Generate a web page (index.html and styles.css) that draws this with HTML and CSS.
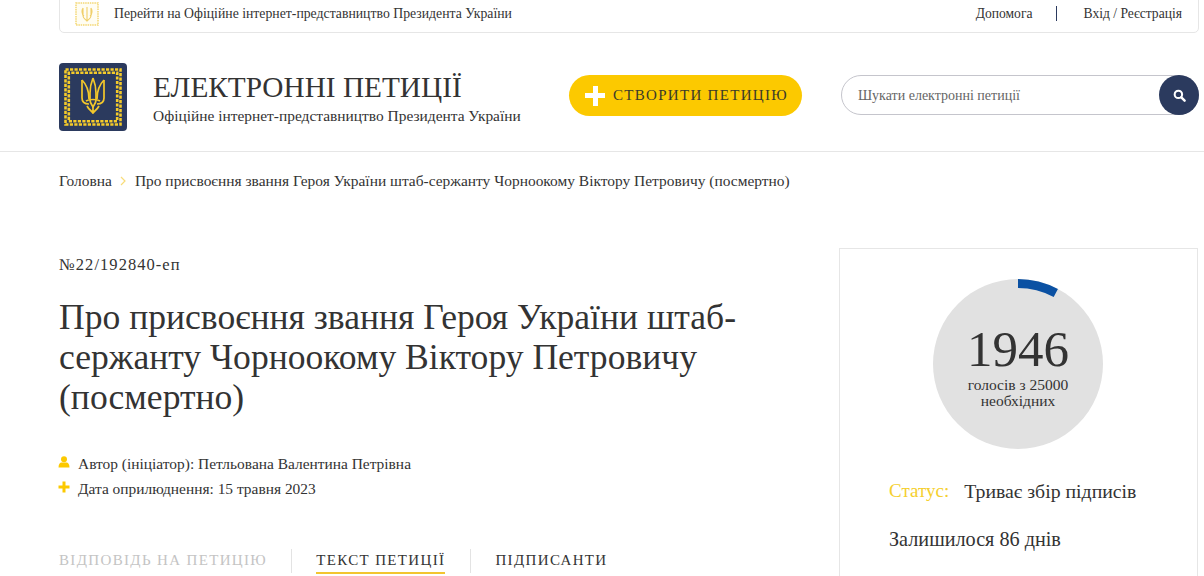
FILE: index.html
```html
<!DOCTYPE html>
<html lang="uk">
<head>
<meta charset="utf-8">
<title>Електронні петиції</title>
<link rel="stylesheet" href="styles.css">
</head>
<body>
<div class="topbar">
  <a class="topbar-link">
    <svg class="topbar-logo" viewBox="0 0 24 24">
      <rect x="1" y="1" width="22" height="22" fill="#fffdf2" stroke="#f3d774" stroke-width="1.500" stroke-dasharray="1.500 .8"/>
      <g fill="none" stroke="#f0cf6a" stroke-width="1.100"><path d="M12 5v14M8 6v8c0 2 2 3 4 5c2-2 4-3 4-5V6M8 6c-1.500 2-1.500 6 1 8M16 6c1.500 2 1.500 6-1 8"/></g>
    </svg>
    <span>Перейти на Офіційне інтернет-представництво Президента України</span>
  </a>
  <nav class="topbar-nav">
    <a>Допомога</a>
    <i class="topbar-sep"></i>
    <a>Вхід / Реєстрація</a>
  </nav>
</div>
<header class="header">
  <svg class="logo" viewBox="0 0 68 68">
    <rect width="68" height="68" rx="4" fill="#2b3a5e"/>
    <g fill="none" stroke="#f5cb2a" stroke-width="2.600">
      <rect x="6.500" y="6.500" width="55" height="55" stroke-dasharray="3.200 1.300"/>
      <rect x="9.800" y="9.800" width="48.400" height="48.400" stroke-dasharray="3.200 1.300" stroke-dashoffset="2"/>
    </g>
    <g fill="none" stroke="#f3c72b" stroke-width="1.700" stroke-linejoin="round">
      <path d="M23 17V35C23 40 27 41 30 41M45 17V35C45 40 41 41 38 41"/>
      <path d="M23 17C28 22 30 28 30 36M45 17C40 22 38 28 38 36"/>
      <path d="M34 15C32 20 31 25 31 30V37C31 40 33 42 34 44C35 42 37 40 37 37V30C37 25 36 20 34 15"/>
      <path d="M27 38C30 36 38 36 41 38"/>
      <path d="M28 43C30 47 33 48 34 50C35 48 38 47 40 43M34 44V50"/>
    </g>
  </svg>
  <div class="brand">
    <div class="brand-title">ЕЛЕКТРОННІ ПЕТИЦІЇ</div>
    <div class="brand-sub">Офіційне інтернет-представництво Президента України</div>
  </div>
  <a class="create-btn"><span class="create-plus"></span>СТВОРИТИ ПЕТИЦІЮ</a>
  <div class="search">
    <span class="search-text">Шукати електронні петиції</span>
    <span class="search-btn">
      <svg viewBox="0 0 14 14" width="13" height="13"><circle cx="5.800" cy="5.800" r="4" fill="none" stroke="#fff" stroke-width="2.200"/><path d="M9 9l3.500 3.500" stroke="#fff" stroke-width="2.600" stroke-linecap="round"/></svg>
    </span>
  </div>
</header>
<div class="crumbs">
  <a>Головна</a>
  <svg class="crumb-arrow" viewBox="0 0 6 10" width="6" height="10"><path d="M1 1l4 4l-4 4" fill="none" stroke="#f8dc7a" stroke-width="1.200"/></svg>
  <span>Про присвоєння звання Героя України штаб-сержанту Чорноокому Віктору Петровичу (посмертно)</span>
</div>
<main class="main">
  <section class="petition">
    <div class="number">№22/192840-еп</div>
    <h1 class="title">Про присвоєння звання Героя України штаб-сержанту Чорноокому Віктору Петровичу (посмертно)</h1>
    <div class="meta">
      <div class="meta-row">
        <svg class="meta-icon" viewBox="0 0 12 12"><circle cx="6" cy="3.200" r="3" fill="#fcc900"/><path d="M0.500 11.500c0-3.500 1.500-5 3-5h5c1.500 0 3 1.500 3 5z" fill="#fcc900"/></svg>
        <span>Автор (ініціатор): Петльована Валентина Петрівна</span>
      </div>
      <div class="meta-row">
        <svg class="meta-icon" viewBox="0 0 12 12"><path d="M6 .5v11M.5 6h11" stroke="#fcc900" stroke-width="3"/></svg>
        <span>Дата оприлюднення: 15 травня 2023</span>
      </div>
    </div>
    <div class="tabs">
      <a class="tab tab-muted">ВІДПОВІДЬ НА ПЕТИЦІЮ</a>
      <a class="tab tab-active">ТЕКСТ ПЕТИЦІЇ</a>
      <a class="tab">ПІДПИСАНТИ</a>
    </div>
  </section>
  <aside class="card">
    <div class="gauge">
      <svg class="gauge-arc" viewBox="0 0 170 170"><path d="M85 4.500A80.500 80.500 0 0 1 122.800 14" fill="none" stroke="#0b51a3" stroke-width="9"/></svg>
      <div class="gauge-num">1946</div>
      <div class="gauge-label">голосів з 25000<br>необхідних</div>
    </div>
    <div class="status"><span class="status-key">Статус:</span><span>Триває збір підписів</span></div>
    <div class="left">Залишилося 86 днів</div>
  </aside>
</main>
</body>
</html>
```
FILE: styles.css
```css
* { box-sizing: border-box; }
html, body { margin: 0; height: 576px; overflow: hidden; background: #fff; }
body { font-family: "Liberation Serif", "DejaVu Serif", serif; color: #333; }
.topbar {
  margin: -1px 5px 0 59px; height: 34px; padding: 0 16px 5px 15px;
  display: flex; align-items: center; justify-content: space-between;
  border: 1px solid #e6e6e6; border-radius: 0 0 5px 5px; font-size: 13.750px;
}
.topbar-link { display: flex; align-items: center; gap: 15px; }
.topbar-logo { width: 24px; height: 24px; display: block; }
.topbar-nav { display: flex; align-items: center; font-size: 13.600px; }
.topbar-sep { width: 1px; height: 15px; background: #2b3a5e; margin: 0 27px 0 23px; }
.header { height: 119px; padding: 30px 5px 0 59px; display: flex; align-items: flex-start; border-bottom: 1px solid #e6e6e6; }
.logo { width: 68px; height: 68px; flex: none; }
.brand { margin: 7px 0 0 26px; width: 416px; }
.brand-title { font-size: 29.300px; line-height: 34px; }
.brand-sub { font-size: 15.430px; line-height: 20px; margin-top: 2px; }
.create-btn {
  width: 233px; height: 41px; border-radius: 21px; background: #fcc900; margin-top: 12px;
  display: flex; align-items: center; padding-left: 16px;
  font-size: 15px; letter-spacing: 1.300px; color: #3a3a2a;
}
.create-plus { width: 20px; height: 20px; margin-right: 8px; background:
  linear-gradient(#fff, #fff) center / 20px 5px no-repeat, linear-gradient(#fff, #fff) center / 5px 20px no-repeat; }
.search {
  margin: 12px 0 0 39px; width: 358px; height: 40px; border: 1px solid #c5c5cc; border-radius: 20px;
  display: flex; align-items: center; justify-content: space-between; padding-left: 16px;
  font-size: 14px; color: #666;
}
.search-text { padding-top: 2px; }
.search-btn { width: 40px; height: 40px; margin-right: -1px; border-radius: 50%; background: #2b3a5e; display: flex; align-items: center; justify-content: center; }
.crumbs { padding: 20px 0 0 59px; height: 96px; display: flex; align-items: flex-start; font-size: 15.450px; line-height: 17px; }
.crumb-arrow { margin: 4px 9px 0 8px; }
.main { display: flex; padding: 0 7px 0 59px; align-items: flex-start; }
.petition { width: 780px; flex: none; padding-top: 8px; }
.number { font-size: 16.500px; letter-spacing: 1.050px; line-height: 18px; }
.title { margin: 23px 0 0; width: 700px; font-weight: 400; font-size: 35.600px; line-height: 40px; color: #333; }
.meta { margin-top: 34px; font-size: 15.430px; }
.meta-row { display: flex; align-items: center; height: 25px; }
.meta-icon { width: 12px; height: 12px; margin: -3px 8px 0 -1px; flex: none; }
.tabs { display: flex; margin-top: 48px; font-size: 15px; letter-spacing: 1.350px; }
.tab { height: 24px; padding: 0 25px 0 24px; border-right: 1px solid #e3e3e3; position: relative; line-height: 23px; }
.tab:first-child { padding-left: 0; padding-right: 24px; }
.tab:last-child { border: 0; }
.tab-muted { color: #c4c4c4; }
.tab-active::after { content: ""; position: absolute; left: 24px; right: 25px; bottom: -1px; height: 2px; background: #f2c530; }
.card { width: 359px; height: 400px; flex: none; border: 1px solid #e6e6e6; padding: 30px 0 0 49px; }
.gauge { position: relative; width: 170px; height: 170px; margin-left: 44px; border-radius: 50%; background: #e1e1e1; text-align: center; padding-top: 42px; }
.gauge-arc { position: absolute; left: 0; top: 0; width: 170px; height: 170px; }
.gauge-num { font-size: 51px; line-height: 56px; color: #333; }
.gauge-label { font-size: 15.500px; line-height: 16px; }
.status { margin-top: 30px; font-size: 19.800px; line-height: 24px; display: flex; gap: 15px; }
.status-key { color: #f5cf2e; font-size: 19px; }
.left { margin-top: 24px; font-size: 20.200px; line-height: 24px; }
```
